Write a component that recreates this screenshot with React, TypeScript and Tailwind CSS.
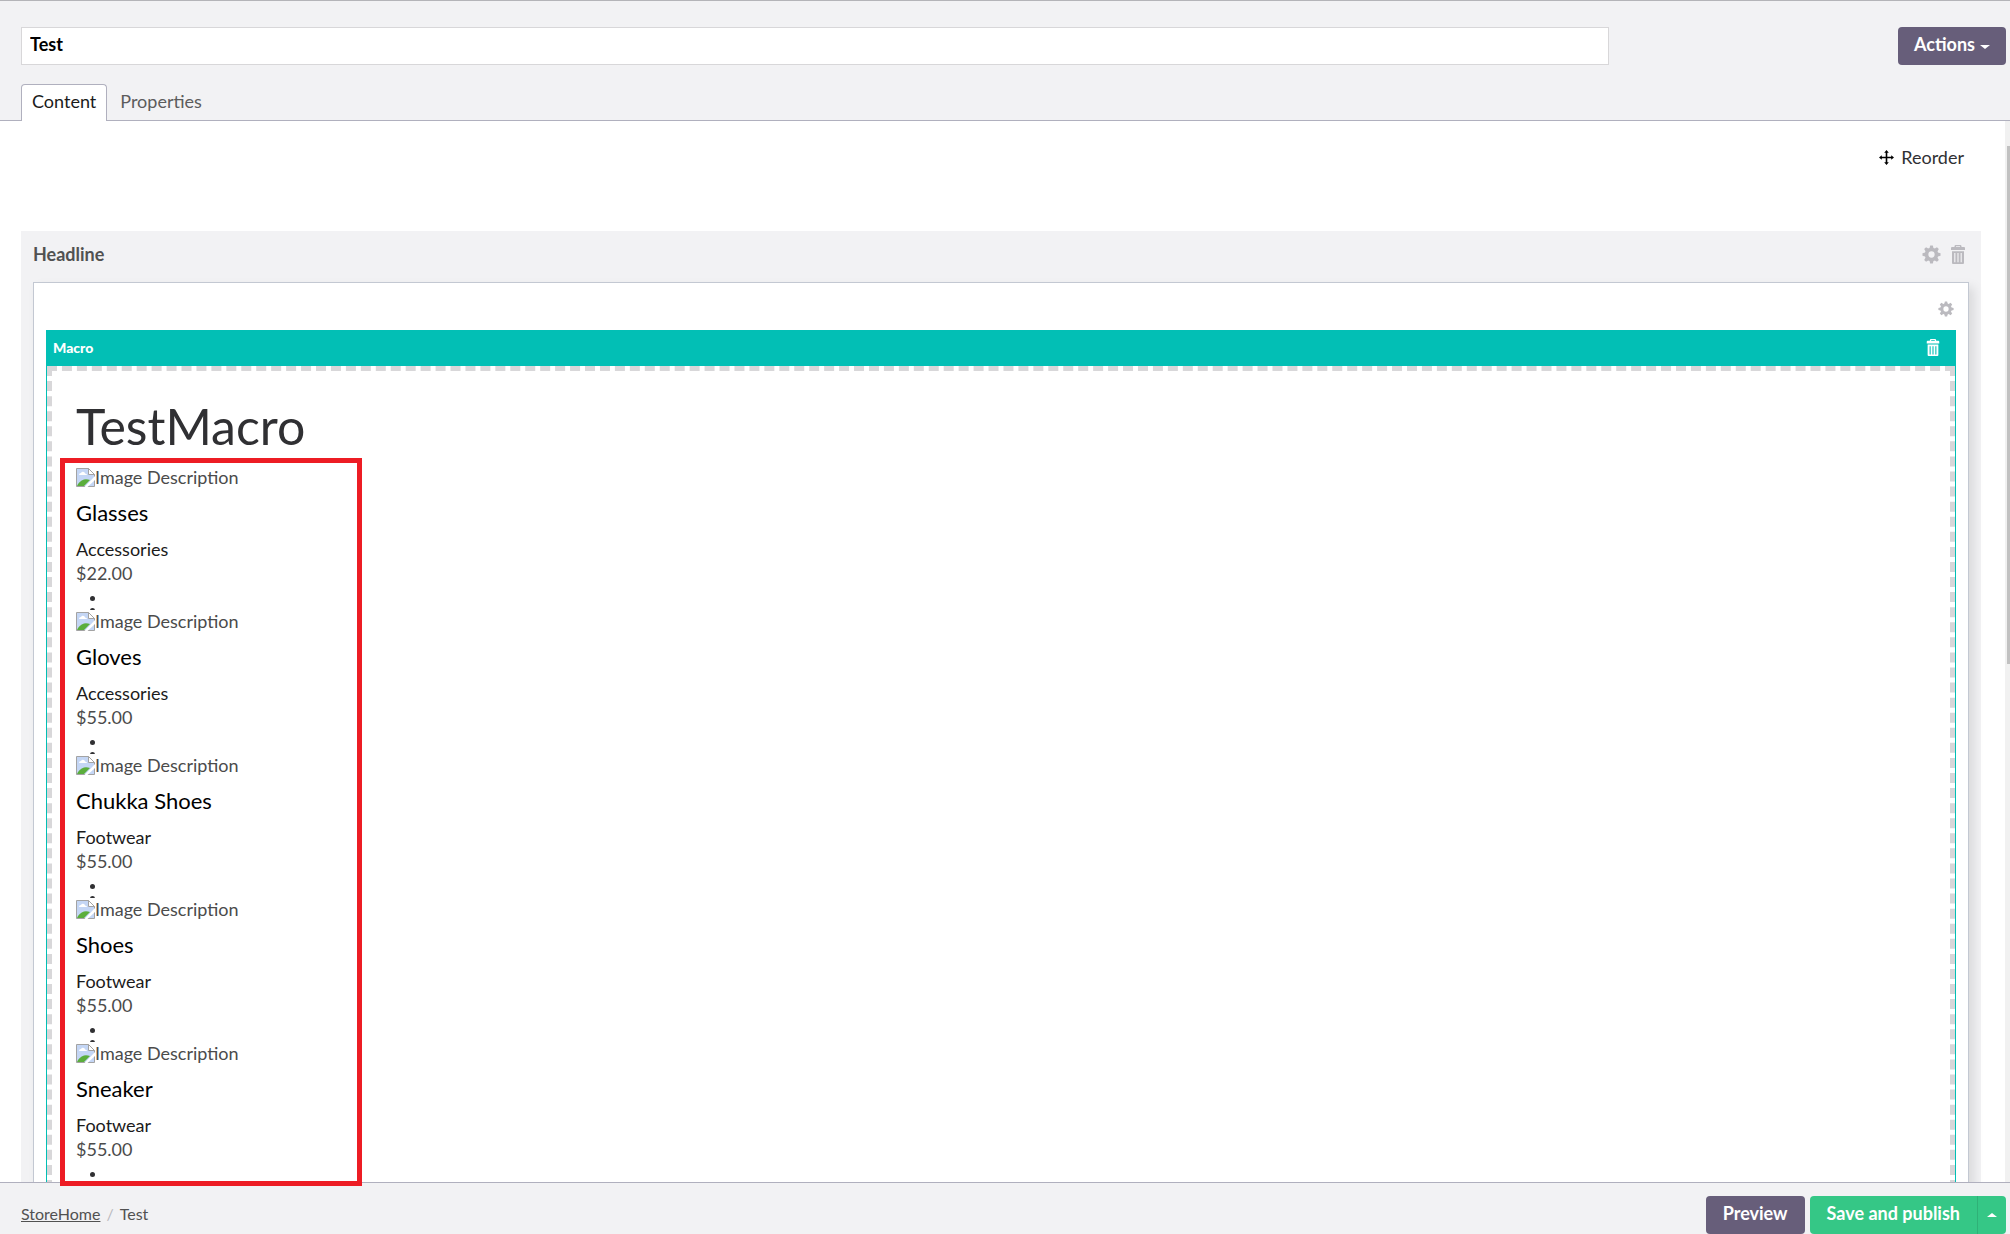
import { useState } from 'react'

const products = [
  { name: 'Glasses', category: 'Accessories', price: '$22.00' },
  { name: 'Gloves', category: 'Accessories', price: '$55.00' },
  { name: 'Chukka Shoes', category: 'Footwear', price: '$55.00' },
  { name: 'Shoes', category: 'Footwear', price: '$55.00' },
  { name: 'Sneaker', category: 'Footwear', price: '$55.00' },
]

const gearTeeth = [0, 45, 90, 135, 180, 225, 270, 315]

function GearIcon({ className }: { className?: string }) {
  return (
    <svg viewBox="0 0 20 20" fill="currentColor" className={className} aria-hidden="true">
      <circle cx="10" cy="10" r="5.2" fill="none" stroke="currentColor" strokeWidth="3.8" />
      {gearTeeth.map((angle) => (
        <path key={angle} d="M7.700 4.200 8.600.500h2.800l.9 3.700z" transform={`rotate(${angle} 10 10)`} />
      ))}
    </svg>
  )
}

function TrashIcon({ className }: { className?: string }) {
  return (
    <svg viewBox="0 0 14 19" fill="currentColor" className={className} aria-hidden="true">
      <path d="M3.500 2V1.200Q3.500 0 4.800 0h4.400q1.300 0 1.300 1.200V2H13q1 0 1 1v2H0V3q0-1 1-1zM5 2h4V1.200H5z" />
      <path
        fillRule="evenodd"
        d="M1 6.200h12V18q0 1-1 1H2q-1 0-1-1zM3.200 8v9.200h1.200V8zm3.200 0v9.200h1.200V8zm3.200 0v9.200h1.200V8z"
      />
    </svg>
  )
}

function MoveIcon({ className }: { className?: string }) {
  return (
    <svg viewBox="0 0 15 15" fill="currentColor" className={className} aria-hidden="true">
      <path d="M7.500 0 9.800 2.800H8.300v3.900h3.900V5.200L15 7.500l-2.800 2.300V8.300H8.300v3.900h1.500L7.500 15l-2.300-2.800h1.500V8.300H2.800v1.500L0 7.500l2.800-2.300v1.500h3.900V2.800H5.200z" />
    </svg>
  )
}

function BrokenImageIcon({ className }: { className?: string }) {
  return (
    <svg viewBox="0 0 19 19" className={className} aria-hidden="true">
      <path d="M.5.500h12l6 6v12H.5z" fill="#c4d6f5" stroke="#a3a3a3" />
      <path d="M3 7q0-2 2-2 1-2 3-1 1 .500 1 1.500 2 0 2 1.500z" fill="#fff" />
      <path d="M1 18q2-5 7-6.500 3-.5 6 .5l-6 6z" fill="#5bae3c" />
      <path d="M19 8v4l-7.500 7H8.500z" fill="#fff" />
      <path d="M12.500.500v6h6z" fill="#fff" stroke="#a3a3a3" />
    </svg>
  )
}

function Product({ name, category, price }: { name: string; category: string; price: string }) {
  return (
    <article className="h-36">
      <div className="flex h-6 items-center text-[#4b4b4b]">
        <BrokenImageIcon className="size-[19px]" />
        <span>Image Description</span>
      </div>
      <h4 className="mt-3 text-[22px] leading-6 text-black">{name}</h4>
      <p className="mt-3 leading-6 text-[#1b1b1b]">{category}</p>
      <p className="leading-6 text-[#4b4b4b]">{price}</p>
      <ul className="mt-[7px] h-[18px] overflow-hidden pl-[14px]">
        <li className="mt-1 size-[5px] rounded-full bg-[#303033]" />
        <li className="mt-[7px] size-[5px] rounded-full bg-[#303033]" />
      </ul>
    </article>
  )
}

export default function App() {
  const [title, setTitle] = useState('Test')

  return (
    <div className="flex h-screen flex-col bg-white font-['Lato',sans-serif] text-[18px] text-[#303033]">
      <header className="shrink-0 border-y border-t-[#b4b4b8] border-b-[#b0b0be] bg-[#f2f2f4] pt-[26px]">
        <div className="flex justify-between pr-1 pl-[21px]">
          <input
            aria-label="Name"
            value={title}
            onChange={(e) => setTitle(e.target.value)}
            className="h-[38px] w-4/5 border border-[#d8d7d9] bg-white px-2 pb-1 font-bold text-black outline-none"
          />
          <button className="flex h-[38px] items-center gap-[5px] rounded bg-[#675e7a] px-4 pb-[3px] font-bold text-white">
            Actions
            <span className="mt-1 border-x-[5px] border-t-4 border-x-transparent border-t-white" />
          </button>
        </div>
        <nav className="mt-[19px] -mb-px flex pl-[21px] leading-6">
          <a href="#content" className="rounded-t border border-b-0 border-[#b0b0be] bg-white px-[10px] pt-1 pb-2 text-[#1b1b1b]">
            Content
          </a>
          <a href="#properties" className="px-[13px] pt-[5px] pb-2 text-[#5c5c5c]">
            Properties
          </a>
        </nav>
      </header>

      <div className="relative min-h-0 flex-1">
        <div className="flex h-full overflow-hidden">
          <main className="min-w-0 flex-1 pr-6 pl-[21px]">
            <div className="flex justify-end pt-6 pr-[17px] pb-[62px]">
              <button className="flex items-center gap-[7px] leading-6 text-[#303033]">
                <MoveIcon className="size-[15px] text-black" />
                Reorder
              </button>
            </div>

            <section className="bg-[#f2f2f4] px-3">
              <div className="flex h-[51px] items-center justify-between pr-1 pb-1">
                <h2 className="font-bold text-[#515151]">Headline</h2>
                <div className="flex items-center gap-[10px] text-[#bbbabf]">
                  <button aria-label="Row settings">
                    <GearIcon className="size-[19px]" />
                  </button>
                  <button aria-label="Delete row">
                    <TrashIcon className="h-[19px] w-[14px]" />
                  </button>
                </div>
              </div>

              <div className="border border-[#c3c8d2] bg-white px-3 shadow-[5px_5px_10px_rgba(0,0,0,0.1)]">
                <div className="flex h-[47px] items-center justify-end pt-1 pr-[2px] text-[#bbbabf]">
                  <button aria-label="Cell settings">
                    <GearIcon className="size-4" />
                  </button>
                </div>

                <div className="border-x border-[#02bfb5]">
                  <div className="flex h-9 items-center justify-between bg-[#02bfb5] pr-[15px] pb-[2px] pl-[6px] text-white">
                    <h3 className="text-[14px] font-black">Macro</h3>
                    <button aria-label="Delete macro">
                      <TrashIcon className="h-[17px] w-[14px]" />
                    </button>
                  </div>
                  <div className="border-[5px] border-dashed border-[#d8d7d9] px-6 pt-6">
                    <h1 className="mt-2 mb-4 text-[50px] leading-[46px]">TestMacro</h1>
                    {products.map((product) => (
                      <Product key={product.name} {...product} />
                    ))}
                  </div>
                </div>
              </div>
            </section>
          </main>

          {/* scrollbar */}
          <div className="w-[5px] shrink-0 bg-[#f1f1f1] pt-[25px] pl-[2px]">
            <div className="h-1/2 bg-[#c1c1c1]" />
          </div>
        </div>

        {/* highlight around the macro output, runs over the footer edge */}
        <div className="pointer-events-none absolute top-[337px] -bottom-1 left-[60px] w-[302px] border-[5px] border-[#ed1c24]" />
      </div>

      <footer className="flex h-[52px] shrink-0 items-end justify-between border-t border-[#b0b0be] bg-[#f2f2f4] pr-1 pl-[21px]">
        <nav aria-label="Breadcrumb" className="flex gap-[6px] pb-2 text-[16px] leading-6 text-[#515151]">
          <a href="#storehome" className="underline">
            StoreHome
          </a>
          <span className="text-[#bbbabf]">/</span>
          <span>Test</span>
        </nav>
        <div className="flex gap-[5px] font-bold text-white">
          <button className="h-[38px] rounded bg-[#675e7a] px-[17px] pb-1">Preview</button>
          <div className="flex">
            <button className="h-[38px] rounded-l bg-[#35c786] px-[17px] pb-1">Save and publish</button>
            <button
              aria-label="More publish options"
              className="flex h-[38px] items-center rounded-r border-l border-[#2fb177] bg-[#35c786] px-[9px]"
            >
              <span className="border-x-[5px] border-b-4 border-x-transparent border-b-white" />
            </button>
          </div>
        </div>
      </footer>
    </div>
  )
}
